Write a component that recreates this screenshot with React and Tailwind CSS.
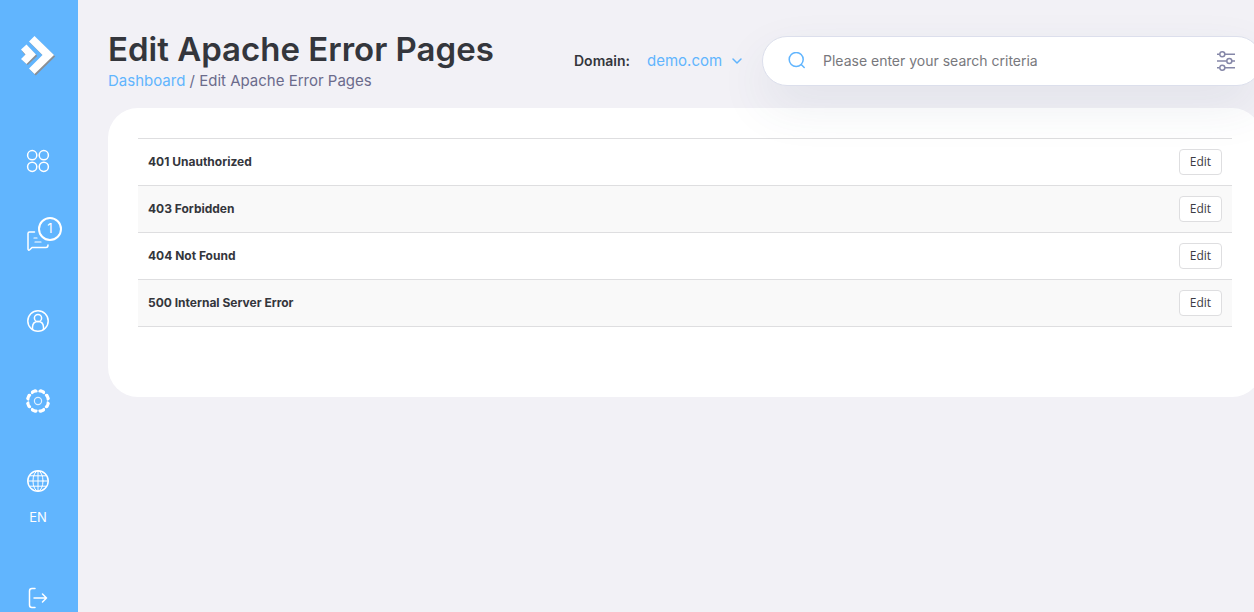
const errorPages = ['401 Unauthorized', '403 Forbidden', '404 Not Found', '500 Internal Server Error'];

function Icon({ children, size = 24, className = '' }) {
  return (
    <svg
      width={size}
      height={size}
      viewBox={`0 0 ${size} ${size}`}
      fill="none"
      stroke="currentColor"
      strokeWidth="1.5"
      strokeLinecap="round"
      strokeLinejoin="round"
      className={className}
      aria-hidden="true"
    >
      {children}
    </svg>
  );
}

function NavLink({ label, children }) {
  return (
    <a href="#" aria-label={label} className="flex h-20 w-full shrink-0 items-center justify-center pr-0.5">
      {children}
    </a>
  );
}

function Sidebar() {
  return (
    <nav className="flex w-[78px] shrink-0 flex-col items-center bg-[#61b5fe] text-white">
      <a href="#" aria-label="Home" className="flex h-[121px] w-full shrink-0 items-start pt-[34px] pl-[19px]">
        <svg width="38" height="44" viewBox="0 0 38 44" aria-hidden="true">
          <g fill="#8b8f94" transform="translate(1.2 1.5)">
            <path d="M2 16 7.500 10.500 17 20.500 7.500 29.500 2 24.500 6 20.500ZM10 7.500 15.500 2 35 21 15.500 40 10 34.500 23.500 21Z" />
          </g>
          <path fill="#fff" d="M2 15.500 7.500 10.500 17 20.500 7.500 30 2 25 6.500 20.500ZM10 7.500 15.500 2 35 21 15.500 40 10 34.500 23.500 21Z" />
        </svg>
      </a>
      <NavLink label="Dashboard">
        <Icon>
          <circle cx="6.200" cy="6.200" r="4.600" />
          <circle cx="17.800" cy="6.200" r="4.600" />
          <circle cx="6.200" cy="17.800" r="4.600" />
          <circle cx="17.800" cy="17.800" r="4.600" />
        </Icon>
      </NavLink>
      <NavLink label="Messages">
        <span className="relative">
          <Icon>
            <path d="M8.500 3H3.500Q2 3 2 4.500V20.200Q2.300 22 4 20.500L6 18.500H20Q22 18.500 22 16" />
            <path strokeWidth="1.200" d="M8 9h3M9 13h6" />
          </Icon>
          <span className="absolute -top-3 left-3 flex size-6 items-center justify-center rounded-full border-2 border-white bg-[#61b5fe] text-[13px]">
            1
          </span>
        </span>
      </NavLink>
      <NavLink label="Account">
        <Icon>
          <circle cx="12" cy="12" r="10.200" />
          <circle cx="12" cy="9" r="3.600" />
          <path d="M6.500 20.200V18Q6.800 12.600 12 12.600T17.500 18V20.200" />
        </Icon>
      </NavLink>
      <NavLink label="Settings">
        <Icon>
          <circle cx="12" cy="12" r="3.600" strokeWidth="1.200" opacity="0.8" />
          {[22.5, 67.5, 112.5, 157.5, 202.5, 247.5, 292.5, 337.5].map((angle) => (
            <path
              key={angle}
              transform={`rotate(${angle} 12 12)`}
              stroke="none"
              fill="currentColor"
              d="M8.500 2.400Q8.700 0 10.400 0H13.600Q15.300 0 15.500 2.400Q15.300 4.200 13.400 3.300Q12 2.700 10.600 3.300Q8.700 4.200 8.500 2.400Z"
            />
          ))}
        </Icon>
      </NavLink>
      <button type="button" aria-label="Language: EN" className="flex h-[117px] w-full shrink-0 flex-col items-center gap-3.5 pt-7 pr-0.5 text-[13px] leading-5">
        <Icon>
          <circle cx="12" cy="12" r="10.200" />
          <g strokeWidth="1">
            <ellipse cx="12" cy="12" rx="5" ry="10" />
            <path d="M12 2V22M2 12H22M4 6.800H20M4 17.200H20" />
          </g>
        </Icon>
        <span>EN</span>
      </button>
      <NavLink label="Log out">
        <Icon>
          <path d="M9 2.500H6Q3.500 2.500 3.500 5V19Q3.500 21.500 6 21.500H9M8 12H20.500M16.500 8 20.500 12 16.500 16" />
        </Icon>
      </NavLink>
    </nav>
  );
}

function Header() {
  return (
    <header className="flex justify-between pb-[18px]">
      <div className="pt-[31px]">
        <h1 className="text-[33px] leading-9 font-semibold text-[#34363c]">Edit Apache Error Pages</h1>
        <p className="mt-1 text-[15px] leading-[19px] text-[#6b6b8c]">
          <a href="#" className="text-[#61b5fe]">Dashboard</a> / Edit Apache Error Pages
        </p>
      </div>
      <div className="flex items-start pt-9">
        <div className="flex h-[50px] items-center text-sm">
          <label htmlFor="domain" className="w-[73px] font-semibold text-[#34363c]">Domain:</label>
          <select id="domain" className="w-[84px] appearance-none bg-transparent text-[15px] text-[#61b5fe]">
            <option>demo.com</option>
          </select>
          <Icon size={12} className="mr-[19px] text-[#61b5fe]">
            <path d="M2 4 6 8 10 4" />
          </Icon>
        </div>
        <form className="relative flex h-[50px] w-[500px] items-center rounded-full border border-[#dcdfec] bg-white pr-[25px] pl-[25px] shadow-[0_20px_50px_rgba(56,80,110,0.09)]">
          <Icon size={18} className="shrink-0 text-[#61b5fe]">
            <circle cx="8.200" cy="7.500" r="7" />
            <path d="M13.200 12.500 16.200 15.500" />
          </Icon>
          <input
            type="search"
            aria-label="Search"
            placeholder="Please enter your search criteria"
            className="ml-[17px] min-w-0 flex-1 bg-transparent text-sm text-[#34363c] outline-none placeholder:text-[#78787d]"
          />
          <button type="button" aria-label="Search filters" className="text-[#8587a8]">
            <svg width="20" height="20" viewBox="0 0 20 20" fill="none" stroke="currentColor" strokeWidth="1.500" aria-hidden="true">
              <path d="M1 3.300H3.500M9 3.300H19M1 10H10.500M16 10H19M1 16.700H3.500M9 16.700H19" />
              <circle cx="6.300" cy="3.300" r="2.500" />
              <circle cx="13.300" cy="10" r="2.500" />
              <circle cx="6.300" cy="16.700" r="2.500" />
            </svg>
          </button>
        </form>
      </div>
    </header>
  );
}

function ErrorPagesTable() {
  return (
    <table className="w-full border-collapse text-left">
      <tbody>
        {errorPages.map((name) => (
          <tr key={name} className="h-[47px] border-y border-[#dedee0] even:bg-[#f9f9f9]">
            <th scope="row" className="px-2.5 text-xs leading-5 font-bold text-[#34363c]">{name}</th>
            <td className="px-2.5 text-right">
              <button
                type="button"
                aria-label={`Edit ${name}`}
                className="inline-flex h-[26px] w-[43px] items-center justify-center rounded-sm border border-[#dedee0] bg-white align-middle font-['Open_Sans',sans-serif] text-xs text-[#3c3c44]"
              >
                Edit
              </button>
            </td>
          </tr>
        ))}
      </tbody>
    </table>
  );
}

export default function App() {
  return (
    <div className="flex h-screen overflow-hidden bg-[#f2f1f6] font-['Inter',sans-serif]">
      <Sidebar />
      <main className="-mr-2 min-w-0 flex-1 pl-[30px]">
        <Header />
        <section className="rounded-[30px] bg-white px-[30px] pt-[30px] pb-[70px]">
          <ErrorPagesTable />
        </section>
      </main>
    </div>
  );
}
